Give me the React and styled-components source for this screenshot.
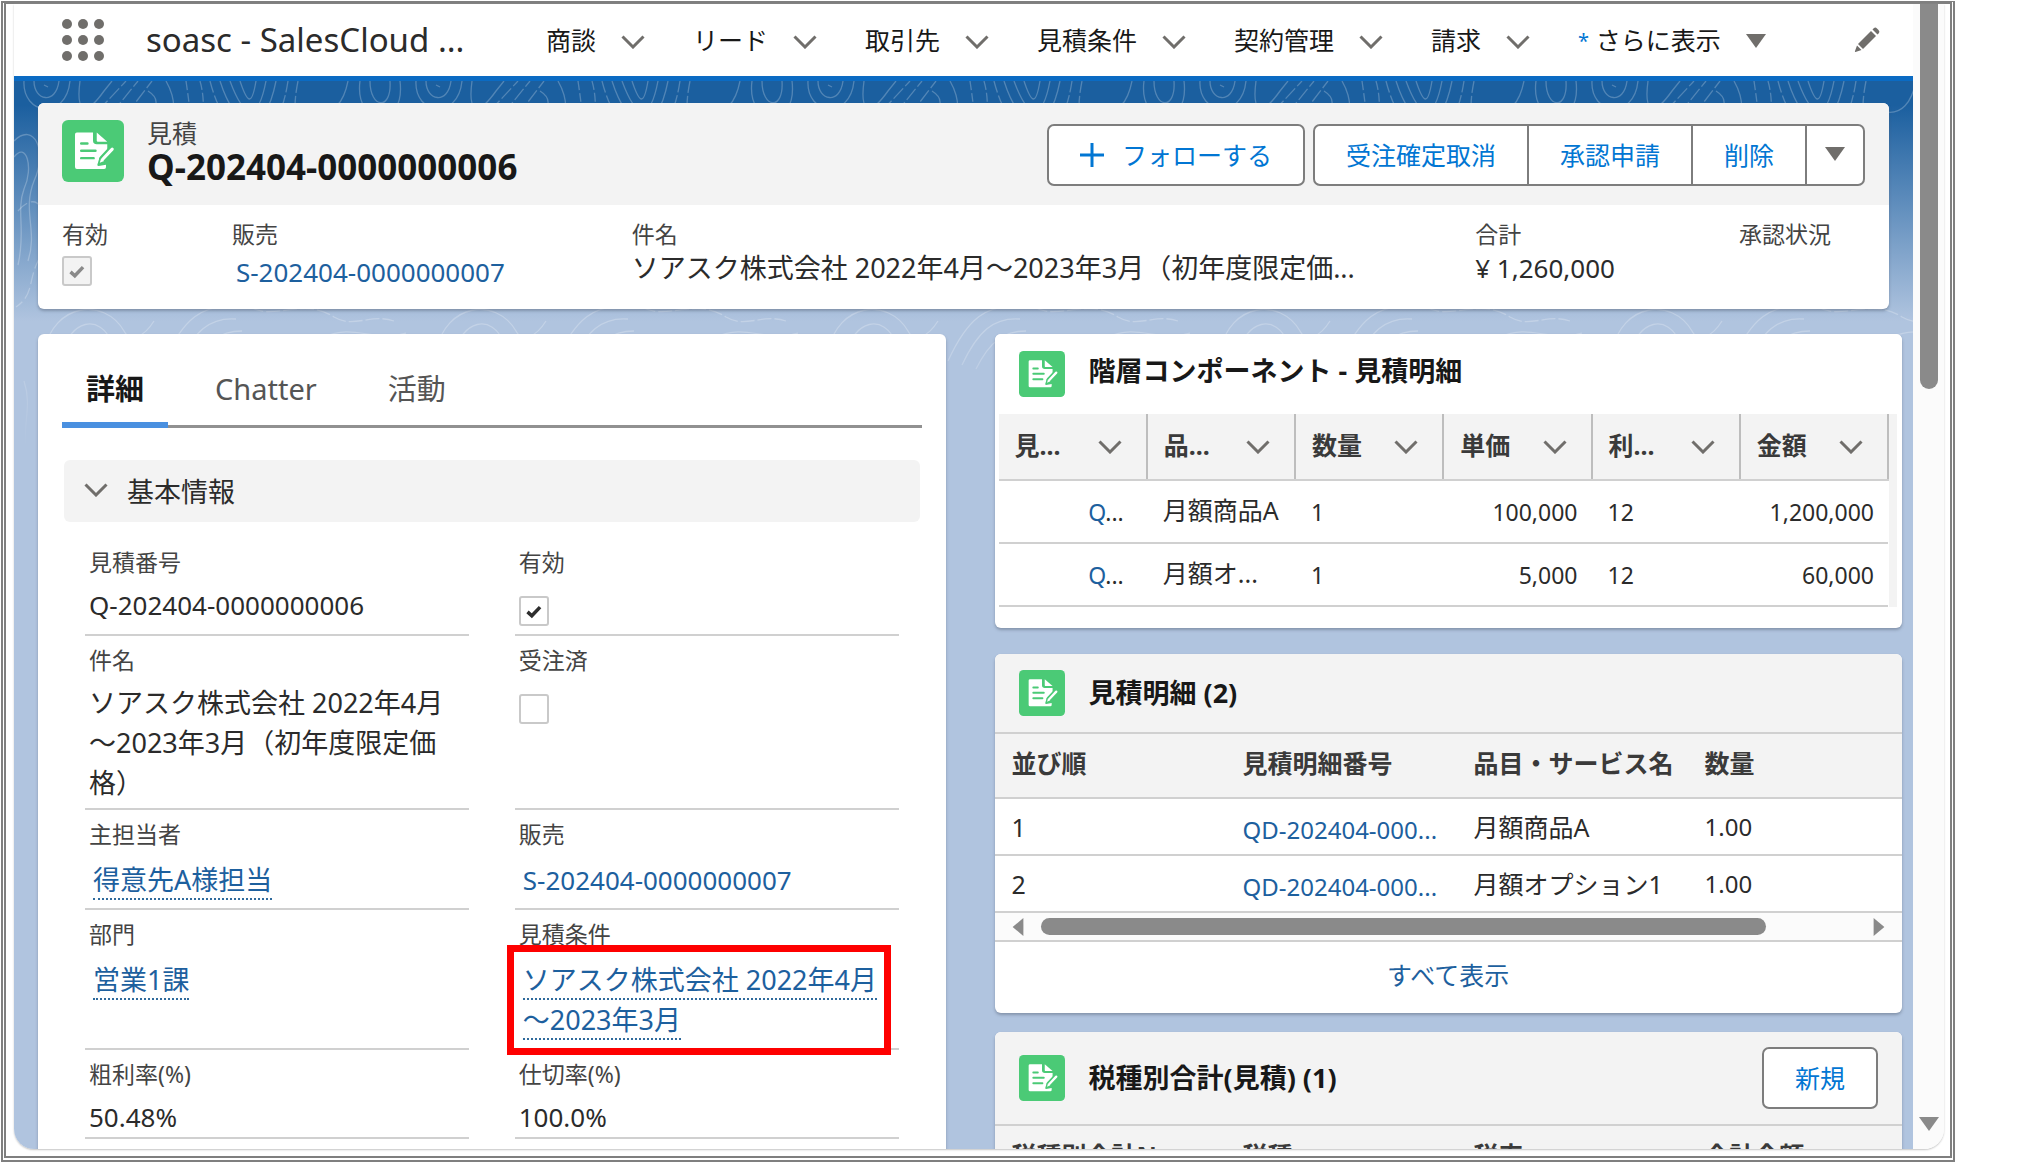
import React from 'react'
import styled, { createGlobalStyle, css } from 'styled-components';

const NAV_ITEMS = ['商談', 'リード', '取引先', '見積条件', '契約管理', '請求'];

const HIERARCHY_COLUMNS = ['見...', '品...', '数量', '単価', '利...', '金額'];

const HIERARCHY_ROWS = [
  { name: '月額商品A', qty: '1', price: '100,000', months: '12', total: '1,200,000' },
  { name: '月額オ...', qty: '1', price: '5,000', months: '12', total: '60,000' },
];

const LINE_ITEMS = [
  { order: '1', number: 'QD-202404-000...', name: '月額商品A', qty: '1.00' },
  { order: '2', number: 'QD-202404-000...', name: '月額オプション1', qty: '1.00' },
];

const Chevron = () => (
  <svg width="24" height="14" viewBox="0 0 24 14" fill="none" stroke="#706e6b" strokeWidth="3" aria-hidden="true">
    <path d="M1.5 1.5 L12 12 L22.5 1.5" />
  </svg>
);

const Triangle = ({ size = 20, dir = 'down', color = '#706e6b' }) => {
  const shapes = {
    down: '0,2 20,2 10,16',
    left: '16,0 16,20 4,10',
    right: '4,0 4,20 16,10',
  };
  return (
    <svg width={size} height={size} viewBox="0 0 20 20" fill={color} aria-hidden="true">
      <polygon points={shapes[dir]} />
    </svg>
  );
};

const QuoteIcon = ({ size = 46 }) => (
  <svg width={size} height={size} viewBox="0 0 100 100" aria-hidden="true">
    <rect width="100" height="100" rx="10" fill="#4bca76" />
    <path
      d="M24 20 H50 V33 Q50 39 56 39 H73 V48 L60 62 L57 72 Q57 74 59 74 L71 72 V76 Q71 79 68 79 H24 Q21 79 21 76 V23 Q21 20 24 20 Z"
      fill="#fff"
    />
    <path d="M56 20 L73 35 H58 Q56 35 56 33 Z" fill="#fff" />
    <path d="M31 38 H41 M31 49.500 H54 M31 61.500 H51" stroke="#4bca76" strokeWidth="4" strokeLinecap="round" />
    <path d="M81 47 L66 63" stroke="#4bca76" strokeWidth="12" strokeLinecap="round" />
    <path d="M81 47 L66 63" stroke="#fff" strokeWidth="5" strokeLinecap="round" />
    <path d="M63 62 L68 66 L61 69 Z" fill="#fff" />
  </svg>
);

const Waffle = () => (
  <svg width="42" height="42" viewBox="0 0 42 42" fill="#706e6b" aria-hidden="true">
    {[5, 21, 37].map((y) => [5, 21, 37].map((x) => <circle key={`${x}-${y}`} cx={x} cy={y} r="5" />))}
  </svg>
);

const Pencil = () => (
  <svg width="26" height="26" viewBox="0 0 26 26" fill="#706e6b" aria-hidden="true">
    <path d="M17 4 L22 9 L9 22 L4 17 Z" />
    <path d="M18.500 2.500 L20 1 Q21.500 0 23 1.500 L24.500 3 Q26 4.500 25 6 L23.500 7.500 Z" />
    <path d="M3 18.500 L7.500 23 L1.500 25 Q0.500 25 1 24 Z" />
  </svg>
);

const Contours = () => (
  <ContourSvg aria-hidden="true">
    <defs>
      <pattern id="contours" width="392" height="392" patternUnits="userSpaceOnUse">
        <g fill="none" stroke="#fff" strokeOpacity="0.24" strokeWidth="1.3">
          <path d="M10 0 C8 34 52 40 56 0 M20 0 C20 20 42 24 45 0" />
          <path d="M30 4 l4 2 M66 0 C62 30 70 38 90 10 L98 0" />
          <path d="M84 30 L112 0 M98 32 L124 0 M112 34 L138 0" strokeDasharray="14 3" />
          <path d="M134 10 C150 20 140 34 122 40 M152 0 C160 14 162 26 158 40" />
          <path d="M172 0 C174 14 176 26 176 40 M186 0 C190 14 190 28 188 40" strokeDasharray="9 3" />
          <path d="M206 0 C222 50 250 60 262 0 M216 0 C230 38 244 42 252 0 M226 0 C234 24 238 24 242 0" />
          <path d="M196 0 C214 70 262 80 274 0 M284 0 C278 30 280 50 300 70" strokeDasharray="12 3" />
          <path d="M300 30 C320 36 330 20 334 0 M346 0 C340 46 392 50 386 0 M356 0 C356 28 378 30 376 0" />
          <path d="M0 60 C20 40 34 70 20 100 C8 130 24 150 14 180" />
          <path d="M0 76 C12 60 20 86 10 108 C2 130 12 150 4 184" />
          <path d="M4 130 C30 100 40 150 24 180 C14 200 20 214 2 226" strokeDasharray="12 4" />
          <path d="M364 70 C350 90 372 120 392 112 M376 76 C366 90 380 104 392 98" />
          <path d="M360 150 C380 130 396 160 380 180 C368 200 380 220 392 214" />
          <path d="M30 270 C40 222 90 216 110 250 C116 262 130 256 140 240" />
          <path d="M46 276 C56 238 86 232 98 262 M60 280 C66 254 80 250 86 276" />
          <path d="M150 280 C170 236 190 224 216 226 M164 284 C180 250 196 236 222 238 M178 288 C192 260 206 250 228 250" />
          <path d="M236 226 C260 240 290 216 320 236 C340 248 356 232 380 240" strokeDasharray="14 3" />
          <path d="M230 262 C262 250 280 274 310 256 C340 242 360 262 392 252" />
          <path d="M10 300 C20 330 4 350 16 380 M372 290 C356 320 384 340 372 372" />
        </g>
      </pattern>
      <linearGradient id="fade" x1="0" y1="0" x2="0" y2="1">
        <stop offset="0" stopColor="#fff" />
        <stop offset="0.7" stopColor="#fff" />
        <stop offset="1" stopColor="#000" />
      </linearGradient>
      <mask id="fadeMask">
        <rect width="100%" height="100%" fill="url(#fade)" />
      </mask>
    </defs>
    <rect width="100%" height="100%" fill="url(#contours)" mask="url(#fadeMask)" />
  </ContourSvg>
);

const App = () => {
  return (
    <Screen>
      <GlobalStyle />
      <Frame>
        <Browser>
          <Page>
            <Nav>
              <IconButton aria-label="アプリケーションランチャー"><Waffle /></IconButton>
              <AppName>soasc - SalesCloud ...</AppName>
              <NavList>
                {NAV_ITEMS.map((item) => (
                  <NavItem key={item}>
                    <a href="#">{item}</a>
                    <Chevron />
                  </NavItem>
                ))}
                <NavItem>
                  <a href="#"><sup>*</sup> さらに表示</a>
                  <Triangle />
                </NavItem>
              </NavList>
              <IconButton $end aria-label="編集"><Pencil /></IconButton>
            </Nav>

            <Body>
              <Contours />
              <RecordHeader />
              <Columns>
                <DetailCard />
                <Side>
                  <HierarchyCard />
                  <LineItemsCard />
                  <TaxCard />
                </Side>
              </Columns>
            </Body>
          </Page>
          <Track>
            <Thumb />
            <Triangle color="#8a8a8a" />
          </Track>
        </Browser>
      </Frame>
    </Screen>
  )
}

export default App;

const RecordHeader = () => (
  <HeaderCard>
    <HeaderTop>
      <QuoteIcon size={62} />
      <HeaderTitle>
        <p>見積</p>
        <h1>Q-202404-0000000006</h1>
      </HeaderTitle>
      <Button>
        <svg width="24" height="24" viewBox="0 0 24 24" stroke="#0176d3" strokeWidth="3" aria-hidden="true">
          <path d="M12 0 V24 M0 12 H24" />
        </svg>
        フォローする
      </Button>
      <ButtonGroup>
        <Button>受注確定取消</Button>
        <Button>承認申請</Button>
        <Button>削除</Button>
        <Button $icon aria-label="その他のアクション"><Triangle /></Button>
      </ButtonGroup>
    </HeaderTop>
    <Highlights>
      <Highlight>
        <label htmlFor="head-active">有効</label>
        <Checkbox id="head-active" type="checkbox" defaultChecked disabled />
      </Highlight>
      <Highlight>
        <span>販売</span>
        <a href="#">S-202404-0000000007</a>
      </Highlight>
      <Highlight $large>
        <span>件名</span>
        <p>ソアスク株式会社 2022年4月～2023年3月（初年度限定価...</p>
      </Highlight>
      <Highlight>
        <span>合計</span>
        <p>¥ 1,260,000</p>
      </Highlight>
      <Highlight>
        <span>承認状況</span>
      </Highlight>
    </Highlights>
  </HeaderCard>
);

const DetailCard = () => (
  <Details>
    <Tabs role="tablist">
      <Tab role="tab" aria-selected="true" $active>詳細</Tab>
      <Tab role="tab" aria-selected="false">Chatter</Tab>
      <Tab role="tab" aria-selected="false">活動</Tab>
    </Tabs>
    <SectionToggle aria-expanded="true">
      <Chevron />
      基本情報
    </SectionToggle>
    <Fields>
      <Field>
        <FieldLabel>見積番号</FieldLabel>
        <FieldValue>Q-202404-0000000006</FieldValue>
      </Field>
      <Field>
        <FieldLabel as="label" htmlFor="active">有効</FieldLabel>
        <Checkbox id="active" type="checkbox" defaultChecked $field />
      </Field>
      <Field>
        <FieldLabel>件名</FieldLabel>
        <FieldValue $large>ソアスク株式会社 2022年4月～2023年3月（初年度限定価格）</FieldValue>
      </Field>
      <Field>
        <FieldLabel as="label" htmlFor="ordered">受注済</FieldLabel>
        <Checkbox id="ordered" type="checkbox" $field />
      </Field>
      <Field>
        <FieldLabel>主担当者</FieldLabel>
        <FieldValue $link $large><DottedLink href="#">得意先A様担当</DottedLink></FieldValue>
      </Field>
      <Field>
        <FieldLabel>販売</FieldLabel>
        <FieldValue $link><Link href="#">S-202404-0000000007</Link></FieldValue>
      </Field>
      <Field>
        <FieldLabel>部門</FieldLabel>
        <FieldValue $link $large><DottedLink href="#">営業1課</DottedLink></FieldValue>
      </Field>
      <Field>
        <FieldLabel>見積条件</FieldLabel>
        <FieldValue $link $large><DottedLink href="#">ソアスク株式会社 2022年4月～2023年3月</DottedLink></FieldValue>
        <Marker />
      </Field>
      <Field $compact>
        <FieldLabel>粗利率(%)</FieldLabel>
        <FieldValue>50.48%</FieldValue>
      </Field>
      <Field $compact>
        <FieldLabel>仕切率(%)</FieldLabel>
        <FieldValue>100.0%</FieldValue>
      </Field>
    </Fields>
  </Details>
);

const HierarchyCard = () => (
  <Card>
    <CardHead $plain>
      <QuoteIcon />
      <h2>階層コンポーネント - 見積明細</h2>
    </CardHead>
    <HierarchyWrap>
      <HierarchyTable>
        <thead>
          <tr>
            {HIERARCHY_COLUMNS.map((col) => (
              <th key={col}>
                <div>{col}<Chevron /></div>
              </th>
            ))}
          </tr>
        </thead>
        <tbody>
          {HIERARCHY_ROWS.map((row) => (
            <tr key={row.name}>
              <NumCell $right><Link href="#">Q</Link>...</NumCell>
              <td>{row.name}</td>
              <NumCell>{row.qty}</NumCell>
              <NumCell $right>{row.price}</NumCell>
              <NumCell>{row.months}</NumCell>
              <NumCell $right>{row.total}</NumCell>
            </tr>
          ))}
        </tbody>
      </HierarchyTable>
    </HierarchyWrap>
  </Card>
);

const LineItemsCard = () => (
  <Card>
    <CardHead>
      <QuoteIcon />
      <h2>見積明細 (2)</h2>
    </CardHead>
    <ListTable>
      <thead>
        <tr>
          <th>並び順</th>
          <th>見積明細番号</th>
          <th>品目・サービス名</th>
          <th>数量</th>
        </tr>
      </thead>
      <tbody>
        {LINE_ITEMS.map((item) => (
          <tr key={item.order}>
            <td>{item.order}</td>
            <td><Link href="#">{item.number}</Link></td>
            <td>{item.name}</td>
            <td>{item.qty}</td>
          </tr>
        ))}
      </tbody>
    </ListTable>
    <HTrack>
      <Triangle size={18} dir="left" color="#8a8a8a" />
      <div><HThumb /></div>
      <Triangle size={18} dir="right" color="#8a8a8a" />
    </HTrack>
    <CardFoot>
      <Link href="#">すべて表示</Link>
    </CardFoot>
  </Card>
);

const TaxCard = () => (
  <Card>
    <CardHead $tall>
      <QuoteIcon />
      <h2>税種別合計(見積) (1)</h2>
      <Button>新規</Button>
    </CardHead>
    <ListTable>
      <thead>
        <tr>
          <th>税種別合計No</th>
          <th>税種</th>
          <th>税率</th>
          <th>合計金額</th>
        </tr>
      </thead>
    </ListTable>
  </Card>
);


const GlobalStyle = createGlobalStyle`
  *{
    box-sizing: border-box;
  }
  body{
    margin: 0;
    background-color: #fff;
    color: #2b2b2b;
    font-family: "Noto Sans", "Noto Sans CJK JP", sans-serif;
    font-size: 25px;
  }
  h1, h2, p{
    margin: 0;
  }
  a{
    color: inherit;
    text-decoration: none;
  }
  button{
    font-family: inherit;
    cursor: pointer;
  }
  svg{
    flex-shrink: 0;
  }
`;

const Screen = styled.div`
  display: flex;
  height: 100vh;
  padding: 1px 72px 6px 1px;
`;

const Frame = styled.div`
  display: flex;
  flex: 1;
  min-width: 0;
  border: 5px double #7f7f7f;
  border-top: 3px solid #7f7f7f;
  border-bottom-width: 6px;
  padding: 0 6px 7px 8px;
`;

const Browser = styled.div`
  display: flex;
  flex: 1;
  min-width: 0;
  border-radius: 0 0 20px 20px;
  overflow: hidden;
  box-shadow: 0 1px 2px #c4c4c4;
`;

const Page = styled.main`
  display: flex;
  flex-direction: column;
  flex: 1;
  min-width: 0;
`;

const Track = styled.div`
  display: flex;
  flex-direction: column;
  justify-content: space-between;
  align-items: center;
  width: 31px;
  padding-bottom: 14px;
  background-color: #fbfbfb;
`;

const Thumb = styled.div`
  width: 18px;
  height: 34%;
  border-radius: 0 0 9px 9px;
  background-color: #8a8a8a;
`;

const Nav = styled.header`
  display: flex;
  align-items: center;
  flex-shrink: 0;
  height: 77px;
  padding: 0 33px 0 48px;
  border-bottom: 5px solid #0b6bc3;
  background-color: #fff;
`;

const IconButton = styled.button`
  display: flex;
  padding: 0;
  border: 0;
  background: none;
  margin-left: ${({ $end }) => ($end ? 'auto' : '0')};
`;

const AppName = styled.span`
  width: 400px;
  margin-left: 42px;
  font-size: 33px;
  line-height: 44px;
  white-space: nowrap;
`;

const NavList = styled.nav`
  display: flex;
  gap: 48px;
`;

const NavItem = styled.div`
  display: flex;
  align-items: center;
  gap: 25px;
  line-height: 36px;
  white-space: nowrap;
  color: #181818;
  svg{
    margin-top: 4px;
  }
  sup{
    font-size: 20px;
    line-height: 1;
    vertical-align: 2px;
    color: #0176d3;
  }
`;

const Body = styled.div`
  position: relative;
  display: flex;
  flex-direction: column;
  flex: 1;
  min-height: 0;
  gap: 25px;
  padding: 22px 11px 0 24px;
  background: linear-gradient(#1b5f9f 0, #1b5f9f 24px, #b0c4df 240px);
`;

const ContourSvg = styled.svg`
  position: absolute;
  inset: 0;
  width: 100%;
  height: 370px;
`;

const cardBox = css`
  position: relative;
  border-radius: 6px;
  background-color: #fff;
  box-shadow: 0 2px 3px rgba(80, 90, 110, 0.45);
`;

const HeaderCard = styled.section`
  ${cardBox}
  margin-right: 13px;
  flex-shrink: 0;
`;

const HeaderTop = styled.div`
  display: flex;
  align-items: center;
  height: 102px;
  padding: 2px 24px 0;
  border-radius: 6px 6px 0 0;
  background-color: #f3f3f3;
  & > svg{
    margin-bottom: 8px;
  }
`;

const HeaderTitle = styled.div`
  flex: 1;
  margin-left: 23px;
  margin-bottom: 6px;
  p{
    font-size: 25px;
    line-height: 30px;
    color: #444;
  }
  h1{
    font-size: 35px;
    line-height: 38px;
    color: #181818;
  }
`;

const Button = styled.button`
  display: flex;
  align-items: center;
  gap: 18px;
  height: 62px;
  padding: 0 ${({ $icon }) => ($icon ? '18px' : '31px')};
  border: 2px solid #7d7d7d;
  border-radius: 7px;
  background-color: #fff;
  color: #0176d3;
  font-size: 25px;
  line-height: 36px;
  white-space: nowrap;
`;

const ButtonGroup = styled.div`
  display: flex;
  margin-left: 8px;
  ${Button}{
    border-radius: 0;
  }
  ${Button} + ${Button}{
    border-left: 0;
  }
  ${Button}:first-child{
    border-radius: 7px 0 0 7px;
  }
  ${Button}:last-child{
    border-radius: 0 7px 7px 0;
  }
`;

const Highlights = styled.div`
  display: grid;
  grid-template-columns: 170fr 400fr 844fr 264fr 126fr;
  padding: 13px 24px 19px;
`;

const Highlight = styled.div`
  display: flex;
  flex-direction: column;
  align-items: flex-start;
  min-height: 68px;
  white-space: nowrap;
  label, span{
    font-size: 23px;
    line-height: 32px;
    color: #444;
  }
  input{
    margin-top: 6px;
  }
  p{
    font-size: ${({ $large }) => ($large ? '27px' : '26px')};
    line-height: 36px;
  }
  a{
    padding: 4px 0 0 4px;
    font-size: 26px;
    line-height: 36px;
    color: #1d609e;
  }
`;

const tick = (color) =>
  `url("data:image/svg+xml,%3Csvg xmlns='http://www.w3.org/2000/svg' viewBox='0 0 30 30'%3E%3Cpath d='M7.500 16 L12.500 20.500 L22 10.500' fill='none' stroke='%23${color}' stroke-width='4'/%3E%3C/svg%3E")`;

const Checkbox = styled.input`
  appearance: none;
  display: block;
  width: 30px;
  height: 30px;
  margin: ${({ $field }) => ($field ? '16px 0 3px 4px' : '0')};
  border: 2px solid #c9c9c9;
  border-radius: 3px;
  background-color: #fff;
  &:checked{
    background-image: ${tick('2e2e2e')};
  }
  &:disabled{
    background-color: #f3f3f3;
    background-image: ${tick('8a8a8a')};
  }
`;

const Columns = styled.div`
  display: grid;
  grid-template-columns: 1fr 1fr;
  gap: 49px;
  flex: 1;
  min-height: 0;
`;

const Side = styled.div`
  display: flex;
  flex-direction: column;
  gap: 26px;
  min-width: 0;
`;

const Details = styled.section`
  ${cardBox}
  min-width: 0;
  padding: 23px 24px 0;
`;

const Tabs = styled.div`
  display: flex;
  gap: 23px;
  border-bottom: 3px solid #919191;
`;

const Tab = styled.button`
  margin-bottom: -3px;
  padding: 10px 24px 12px;
  border: 0;
  border-bottom: 6px solid ${({ $active }) => ($active ? '#4a90e0' : 'transparent')};
  background: none;
  font-size: 29px;
  line-height: 43px;
  font-weight: ${({ $active }) => ($active ? 700 : 400)};
  color: ${({ $active }) => ($active ? '#181818' : '#555')};
`;

const SectionToggle = styled.button`
  display: flex;
  align-items: center;
  gap: 19px;
  width: calc(100% - 4px);
  height: 62px;
  margin: 32px 2px 16px;
  padding: 0 20px 2px;
  border: 0;
  border-radius: 6px;
  background-color: #f3f3f3;
  font-size: 27px;
  color: #2b2b2b;
`;

const Fields = styled.div`
  display: grid;
  grid-template-columns: 1fr 1fr;
  column-gap: 46px;
  padding: 0 23px;
`;

const Field = styled.div`
  position: relative;
  padding: 7px 0 ${({ $compact }) => ($compact ? '0' : '5px')};
  border-bottom: 2px solid #d0d0d0;
`;

const FieldLabel = styled.div`
  display: block;
  padding-left: 4px;
  font-size: 23px;
  line-height: 35px;
  color: #444;
`;

const FieldValue = styled.div`
  padding: ${({ $link }) => ($link ? '8px 20px 3px 8px' : '5px 20px 0 4px')};
  font-size: ${({ $large }) => ($large ? '27px' : '26px')};
  line-height: 40px;
`;

const Link = styled.a`
  color: #1d609e;
`;

const DottedLink = styled(Link)`
  border-bottom: 2px dotted #2f6a9c;
`;

/* red callout laid over the field value */
const Marker = styled.div`
  position: absolute;
  inset: 35px 8px -7px -8px;
  border: 7px solid #fe0000;
  pointer-events: none;
`;

const Card = styled.section`
  ${cardBox}
  & + &:last-child{
    margin-top: -7px;
  }
`;

const CardHead = styled.div`
  display: flex;
  align-items: center;
  gap: 24px;
  height: ${({ $tall }) => ($tall ? '94px' : '80px')};
  padding: 0 24px;
  border-radius: 6px 6px 0 0;
  border-bottom: ${({ $plain }) => ($plain ? '0' : '2px solid #d0d0d0')};
  background-color: ${({ $plain }) => ($plain ? '#fff' : '#f3f3f3')};
  h2{
    flex: 1;
    padding-bottom: ${({ $plain }) => ($plain ? '6px' : '0')};
    font-size: 27px;
    line-height: 36px;
    font-weight: 700;
    color: #181818;
  }
`;

const HierarchyWrap = styled.div`
  margin: 0 5px 0 4px;
  padding: 0 8px 21px 0;
  background: linear-gradient(#f3f3f3, #f3f3f3) right top / 8px calc(100% - 21px) no-repeat;
`;

const HierarchyTable = styled.table`
  width: 100%;
  table-layout: fixed;
  border-collapse: collapse;
  background-color: #fff;
  white-space: nowrap;
  th, td{
    padding: 0 14px 0 16px;
    border-bottom: 2px solid #d0d0d0;
    text-align: left;
  }
  th{
    height: 66px;
    padding-right: 24px;
    border-right: 2px solid #bdbdbd;
    background-color: #f3f3f3;
    line-height: 36px;
    color: #3a3a3a;
  }
  th div{
    display: flex;
    align-items: center;
    justify-content: space-between;
    margin-bottom: 4px;
  }
  th svg{
    margin-top: 4px;
  }
  td{
    height: 63px;
    padding-bottom: 6px;
  }
`;

const NumCell = styled.td`
  && {
    font-size: 23px;
    text-align: ${({ $right }) => ($right ? 'right' : 'left')};
    padding-right: ${({ $right }) => ($right ? '14px' : '0')};
    padding-bottom: 0;
  }
  &&:first-child{
    padding-right: 23px;
  }
`;

const ListTable = styled.table`
  width: 100%;
  table-layout: fixed;
  border-collapse: collapse;
  white-space: nowrap;
  th, td{
    width: 231px;
    padding: 0 0 0 17px;
    border-bottom: 2px solid #d0d0d0;
    text-align: left;
    line-height: 36px;
  }
  th{
    height: 64px;
    padding-bottom: 6px;
    background-color: #f3f3f3;
    color: #3a3a3a;
  }
  th:last-child, td:last-child{
    width: auto;
  }
  td{
    height: 57px;
    font-size: 25px;
  }
  td:nth-child(2){
    padding-top: 6px;
  }
  td:last-child, td a{
    font-size: 24px;
  }
`;

const HTrack = styled.div`
  display: flex;
  align-items: center;
  gap: 14px;
  height: 29px;
  padding: 0 14px;
  border-bottom: 2px solid #d0d0d0;
  background-color: #fbfbfb;
  div{
    flex: 1;
  }
`;

const HThumb = styled.div`
  width: 89%;
  height: 17px;
  border-radius: 9px;
  background-color: #8a8a8a;
`;

const CardFoot = styled.div`
  display: flex;
  justify-content: center;
  padding: 15px 0 20px;
  line-height: 36px;
`;
